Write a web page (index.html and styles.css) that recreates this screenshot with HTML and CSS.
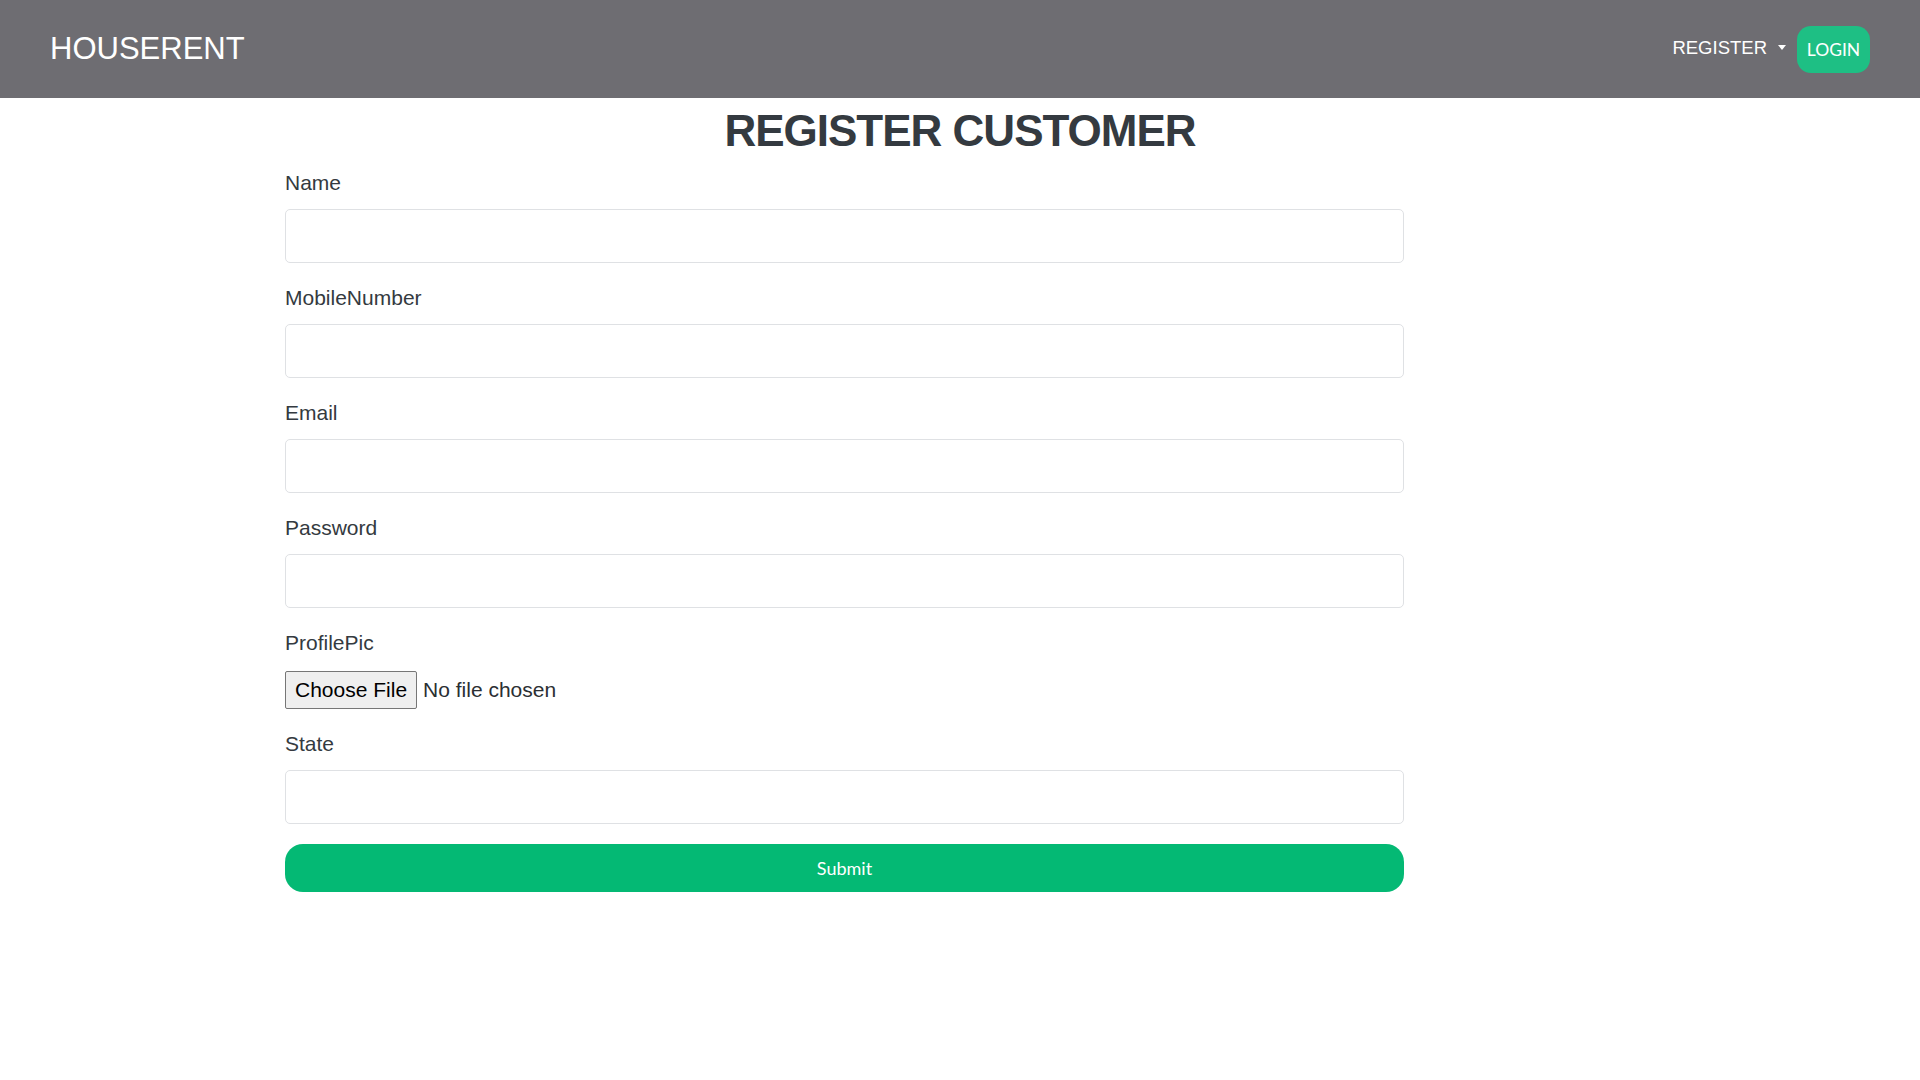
FILE: index.html
```html
<!DOCTYPE html>
<html lang="en">
<head>
<meta charset="utf-8">
<title>HouseRent - Register Customer</title>
<link rel="stylesheet" href="styles.css">
</head>
<body>
<nav class="navbar">
  <a class="brand" href="#">HOUSERENT</a>
  <div class="nav-right">
    <a class="nav-dropdown" href="#">REGISTER <span class="caret"></span></a>
    <a class="btn-login" href="#">LOGIN</a>
  </div>
</nav>
<main class="page">
  <h1 class="title">REGISTER CUSTOMER</h1>
  <form class="form">
    <div class="group">
      <label class="label" for="name">Name</label>
      <input class="control" id="name" type="text">
    </div>
    <div class="group">
      <label class="label" for="mobile">MobileNumber</label>
      <input class="control" id="mobile" type="text">
    </div>
    <div class="group">
      <label class="label" for="email">Email</label>
      <input class="control" id="email" type="email">
    </div>
    <div class="group">
      <label class="label" for="password">Password</label>
      <input class="control" id="password" type="password">
    </div>
    <div class="group">
      <label class="label" for="pic">ProfilePic</label>
      <div class="file-row">
        <span class="file-btn">Choose File</span>
        <span class="file-text">No file chosen</span>
      </div>
    </div>
    <div class="group">
      <label class="label" for="state">State</label>
      <input class="control" id="state" type="text">
    </div>
    <button class="submit" type="button">Submit</button>
  </form>
</main>
</body>
</html>
```

FILE: styles.css
```css
* { box-sizing: border-box; }
html, body { margin: 0; padding: 0; }
body {
  background: #ffffff;
  font-family: "Liberation Sans", Arial, sans-serif;
  color: #343a40;
}
.navbar {
  height: 98px;
  background: #6e6d72;
  display: flex;
  align-items: center;
  justify-content: space-between;
  padding: 0 50px 0 50px;
}
.brand {
  color: #ffffff;
  text-decoration: none;
  font-size: 31px;
  line-height: 1;
  margin-top: -2px;
}
.nav-right {
  display: flex;
  align-items: center;
  gap: 11px;
}
.nav-dropdown {
  color: #ffffff;
  text-decoration: none;
  font-size: 18.5px;
  display: flex;
  align-items: center;
  gap: 11px;
  margin-top: -3px;
}
.caret {
  width: 0;
  height: 0;
  border-left: 4.5px solid transparent;
  border-right: 4.5px solid transparent;
  border-top: 5px solid #ffffff;
}
.btn-login {
  display: flex;
  align-items: center;
  justify-content: center;
  width: 73px;
  height: 47px;
  border-radius: 14px;
  background: #1ebf84;
  color: #ffffff;
  text-decoration: none;
  font-family: Lato, "Open Sans", sans-serif;
  font-size: 17.5px;
  margin-top: 1px;
}
.page {
  padding-top: 6px;
}
.title {
  margin: 0;
  text-align: center;
  font-size: 44px;
  line-height: 53px;
  font-weight: 700;
  letter-spacing: -1px;
  color: #343a40;
}
.form {
  width: 1119px;
  margin: 11px 0 0 285px;
}
.group {
  display: flex;
  flex-direction: column;
  margin-bottom: 20px;
}
.label {
  font-size: 21px;
  line-height: 30px;
  margin-bottom: 11px;
  color: #343a40;
}
.control {
  height: 54px;
  border: 1px solid #dfe1e4;
  border-radius: 5px;
  background: #ffffff;
  font-size: 20px;
  padding: 0 16px;
}
.file-row {
  display: flex;
  align-items: center;
  margin-top: 2px;
  height: 38px;
}
.file-btn {
  height: 38px;
  display: flex;
  align-items: center;
  padding: 0 9px;
  border: 1px solid #767676;
  border-radius: 2px;
  background: #efefef;
  color: #000000;
  font-size: 21px;
}
.file-text {
  margin-left: 6px;
  font-size: 21px;
  color: #2b2f33;
}
.submit {
  display: block;
  width: 100%;
  height: 48px;
  margin-top: 1px;
  border: none;
  border-radius: 18px;
  background: #04b974;
  color: #ffffff;
  font-family: Lato, "Open Sans", sans-serif;
  font-size: 18px;
}
```
